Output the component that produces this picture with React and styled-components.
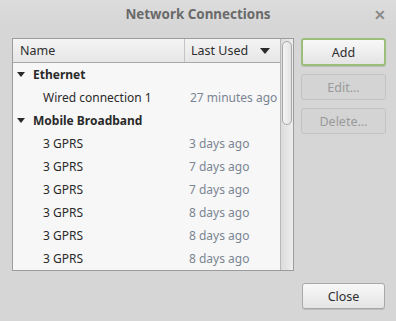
import React from "react";
import styled, { createGlobalStyle } from "styled-components";

const GlobalStyle = createGlobalStyle`
  html, body {
    margin: 0;
    padding: 0;
    background: #d6d6d6;
  }
  body {
    font-family: "Noto Sans", "Open Sans", sans-serif;
    font-size: 12px;
    color: #2e2e2e;
  }
`;

const Window = styled.div`
  width: 396px;
  height: 321px;
  display: flex;
  flex-direction: column;
  background: #d6d6d6;
  overflow: hidden;
`;

const TitleBar = styled.div`
  height: 27px;
  display: flex;
  align-items: center;
  justify-content: center;
  position: relative;
  background: linear-gradient(#dcdcdc, #d6d6d6);
  font-weight: bold;
  font-size: 13.4px;
  color: #6a6a6a;
`;

const CloseX = styled.span`
  position: absolute;
  right: 10px;
  top: 5px;
  font-size: 14px;
  color: #8a8a8a;
`;

const Body = styled.div`
  flex: 1;
  display: flex;
  flex-direction: column;
  padding: 11px 10px 10px 12px;
`;

const MainRow = styled.div`
  display: flex;
  gap: 7px;
`;

const ListBox = styled.div`
  width: 281px;
  height: 231px;
  border: 1px solid #9c9c9c;
  background: #f7f7f7;
  display: flex;
`;

const Tree = styled.div`
  flex: 1;
  display: flex;
  flex-direction: column;
`;

const Header = styled.div`
  height: 23px;
  display: grid;
  grid-template-columns: 172px 1fr;
  border-bottom: 1px solid #a8a8a8;
  background: linear-gradient(#f4f4f4, #e6e6e6);
  font-size: 12.5px;
`;

const HeaderCell = styled.div`
  display: flex;
  align-items: center;
  padding-left: ${(p) => p.$pad}px;
  padding-right: 10px;
  justify-content: space-between;
  border-right: ${(p) => (p.$divider ? "1px solid #c4c4c4" : "none")};
  color: #2e2e2e;
`;

const Row = styled.div`
  height: 23px;
  display: grid;
  grid-template-columns: 172px 1fr;
  align-items: center;
`;

const NameCell = styled.div`
  display: flex;
  align-items: center;
  padding-left: ${(p) => p.$indent}px;
  font-weight: ${(p) => (p.$group ? "bold" : "normal")};
  color: #2a2a2a;
  white-space: nowrap;
`;

const Expander = styled.span`
  width: 0;
  height: 0;
  border-left: 4.5px solid transparent;
  border-right: 4.5px solid transparent;
  border-top: 5px solid #2a2a2a;
  margin-right: 8px;
`;

const DateCell = styled.div`
  padding-left: ${(p) => p.$pad}px;
  color: #7a8593;
  white-space: nowrap;
`;

const SortArrow = styled.span`
  width: 0;
  height: 0;
  border-left: 5px solid transparent;
  border-right: 5px solid transparent;
  border-top: 6px solid #2a2a2a;
`;

const ScrollTrack = styled.div`
  width: 12px;
  border-left: 1px solid #b8b8b8;
  background: linear-gradient(to right, #dcdcdc, #eeeeee);
  display: flex;
  justify-content: center;
  padding-top: 2px;
`;

const Thumb = styled.div`
  width: 8px;
  height: 82px;
  border: 1px solid #a6a6a6;
  border-radius: 5px;
  background: linear-gradient(to right, #f4f4f4, #e2e2e2);
`;

const ButtonColumn = styled.div`
  display: flex;
  flex-direction: column;
  gap: 8px;
`;

const Button = styled.button`
  width: ${(p) => p.$width || 85}px;
  height: ${(p) => (p.$default ? 28 : 26)}px;
  border-radius: 3px;
  font-family: "Noto Sans", "Open Sans", sans-serif;
  font-size: 12.5px;
  padding: 0;
  border: ${(p) =>
    p.$default ? "2px solid #9dbd7b" : p.$disabled ? "1px solid #c2c2c2" : "1px solid #a8a8a8"};
  background: ${(p) =>
    p.$disabled ? "#d4d4d4" : "linear-gradient(#f8f8f8, #e4e4e4)"};
  color: ${(p) => (p.$disabled ? "#9a9a9a" : "#2e2e2e")};
  box-shadow: ${(p) => (p.$disabled ? "none" : "0 1px 0 rgba(0,0,0,0.12)")};
`;

const Footer = styled.div`
  margin-top: auto;
  display: flex;
  justify-content: flex-end;
  padding-right: 1px;
  padding-bottom: 2px;
`;

const rows = [
  { group: "Ethernet" },
  { name: "Wired connection 1", date: "27 minutes ago", pad: 5 },
  { group: "Mobile Broadband" },
  { name: "3 GPRS", date: "3 days ago" },
  { name: "3 GPRS", date: "7 days ago" },
  { name: "3 GPRS", date: "7 days ago" },
  { name: "3 GPRS", date: "8 days ago" },
  { name: "3 GPRS", date: "8 days ago" },
  { name: "3 GPRS", date: "8 days ago" },
];

export default function App() {
  return (
    <Window>
      <GlobalStyle />
      <TitleBar>
        Network Connections
        <CloseX>✕</CloseX>
      </TitleBar>
      <Body>
        <MainRow>
          <ListBox>
            <Tree>
              <Header>
                <HeaderCell $pad={7} $divider>Name</HeaderCell>
                <HeaderCell $pad={6}>
                  Last Used
                  <SortArrow />
                </HeaderCell>
              </Header>
              {rows.map((r, i) =>
                r.group ? (
                  <Row key={i}>
                    <NameCell $indent={4} $group>
                      <Expander />
                      {r.group}
                    </NameCell>
                  </Row>
                ) : (
                  <Row key={i}>
                    <NameCell $indent={30}>{r.name}</NameCell>
                    <DateCell $pad={r.pad || 4}>{r.date}</DateCell>
                  </Row>
                )
              )}
            </Tree>
            <ScrollTrack>
              <Thumb />
            </ScrollTrack>
          </ListBox>
          <ButtonColumn>
            <Button $default>Add</Button>
            <Button $disabled>Edit...</Button>
            <Button $disabled>Delete...</Button>
          </ButtonColumn>
        </MainRow>
        <Footer>
          <Button $width={83}>Close</Button>
        </Footer>
      </Body>
    </Window>
  );
}
